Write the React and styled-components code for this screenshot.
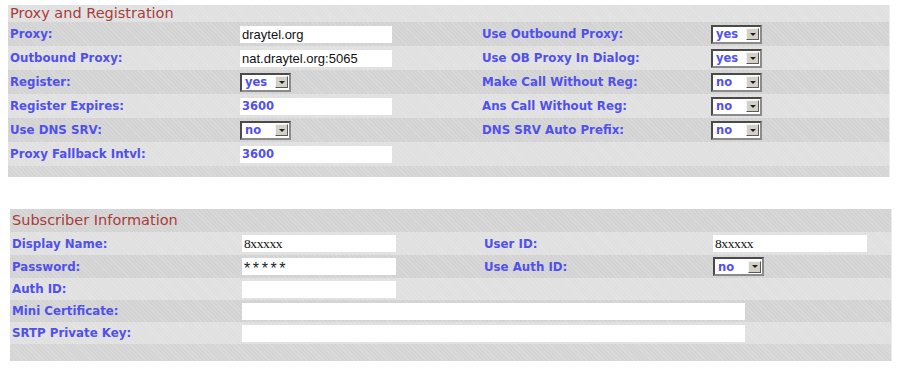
import React from "react";
import styled, { createGlobalStyle } from "styled-components";

const Global = createGlobalStyle`
  body {
    margin: 0;
    background: #ffffff;
    font-family: "DejaVu Sans", Verdana, sans-serif;
  }
`;

const hatch = `repeating-linear-gradient(
    45deg,
    rgba(255, 255, 255, 0.14) 0 1px,
    transparent 1px 3px
  )`;

const Page = styled.div`
  width: 900px;
  height: 378px;
  padding-top: 5px;
  box-sizing: border-box;
  background: #fff;
`;

const Panel = styled.div`
  margin-left: ${(p) => p.left}px;
  width: ${(p) => p.width}px;
  margin-bottom: ${(p) => p.gap || 0}px;
  background: #d5d5d5;
  background-image: ${hatch};
  border-right: 1px solid #ececec;
  padding-bottom: ${(p) => p.bottom}px;
`;

const Title = styled.div`
  height: ${(p) => p.h}px;
  line-height: ${(p) => p.h}px;
  padding-left: 2px;
  font-size: 14.5px;
  color: #a83c3c;
  background: ${(p) => (p.dark ? "#d3d3d3" : "#e0e0e0")};
  background-image: ${hatch};
`;

const Row = styled.div`
  display: grid;
  grid-template-columns: 230px 242px 229px 1fr;
  align-items: center;
  height: ${(p) => p.h}px;
  padding-left: 2px;
  background: ${(p) => (p.dark ? "#d3d3d3" : "#e0e0e0")};
  background-image: ${hatch};
`;

const Label = styled.div`
  font-size: 11.8px;
  font-weight: bold;
  color: #5050ee;
  white-space: nowrap;
`;

const Field = styled.div`
  grid-column: ${(p) => p.span || "auto"};
  display: flex;
  align-items: center;
`;

const TextBox = styled.div`
  flex-shrink: 0;
  width: ${(p) => p.w || 152}px;
  height: 17px;
  background: #fff;
  box-sizing: border-box;
  padding-left: 2px;
  display: flex;
  align-items: center;
  font-family: "DejaVu Sans", Verdana, sans-serif;
  font-size: 11.5px;
  font-weight: bold;
  color: #5050ee;
  white-space: nowrap;
`;

const PlainText = styled.span`
  font-family: "Liberation Sans", Arial, sans-serif;
  font-size: 13px;
  font-weight: normal;
  color: #111;
`;

const SerifText = styled.span`
  font-family: "Liberation Serif", "Times New Roman", serif;
  font-size: 13.5px;
  font-weight: normal;
  letter-spacing: -0.4px;
  color: #111;
`;

const Stars = styled.span`
  font-family: "Liberation Sans", Arial, sans-serif;
  font-size: 16px;
  font-weight: normal;
  letter-spacing: 2.6px;
  color: #222;
  padding-top: 5px;
`;

const Select = styled.div`
  width: 51px;
  height: 19px;
  box-sizing: border-box;
  border: 2px solid #4a4a4a;
  border-right-color: #8a8a8a;
  border-bottom-color: #8a8a8a;
  background: #fff;
  display: flex;
  align-items: center;
  justify-content: space-between;
  padding: 0 1px 0 3px;
  font-size: 11.5px;
  font-weight: bold;
  color: #5050ee;
`;

const Arrow = styled.span`
  width: 13px;
  height: 12px;
  box-sizing: border-box;
  background: #d4d0c8;
  border: 1px solid;
  border-color: #f4f4f4 #5a5a5a #5a5a5a #f4f4f4;
  display: flex;
  align-items: center;
  justify-content: center;
  &::after {
    content: "";
    border-left: 3px solid transparent;
    border-right: 3px solid transparent;
    border-top: 3px solid #222;
  }
`;

const Drop = ({ value }) => (
  <Select>
    {value}
    <Arrow />
  </Select>
);

const proxyRows = [
  ["Proxy:", <TextBox><PlainText>draytel.org</PlainText></TextBox>, "Use Outbound Proxy:", <Drop value="yes" />],
  ["Outbound Proxy:", <TextBox><PlainText>nat.draytel.org:5065</PlainText></TextBox>, "Use OB Proxy In Dialog:", <Drop value="yes" />],
  ["Register:", <Drop value="yes" />, "Make Call Without Reg:", <Drop value="no" />],
  ["Register Expires:", <TextBox>3600</TextBox>, "Ans Call Without Reg:", <Drop value="no" />],
  ["Use DNS SRV:", <Drop value="no" />, "DNS SRV Auto Prefix:", <Drop value="no" />],
  ["Proxy Fallback Intvl:", <TextBox>3600</TextBox>, null, null],
];

const App = () => (
  <Page>
    <Global />
    <Panel left={8} width={881} bottom={11} gap={32}>
      <Title h={17}>Proxy and Registration</Title>
      {proxyRows.map(([l, f, rl, rf], i) => (
        <Row key={l} h={24} dark={i % 2 === 0}>
          <Label>{l}</Label>
          <Field>{f}</Field>
          <Label>{rl}</Label>
          <Field>{rf}</Field>
        </Row>
      ))}
    </Panel>

    <Panel left={10} width={881} bottom={17}>
      <Title h={23} dark>Subscriber Information</Title>
      <Row h={23}>
        <Label>Display Name:</Label>
        <Field>
          <TextBox w={154}><SerifText>8xxxxx</SerifText></TextBox>
        </Field>
        <Label>User ID:</Label>
        <Field>
          <TextBox w={154}><SerifText>8xxxxx</SerifText></TextBox>
        </Field>
      </Row>
      <Row h={23} dark>
        <Label>Password:</Label>
        <Field>
          <TextBox w={154}><Stars>*****</Stars></TextBox>
        </Field>
        <Label>Use Auth ID:</Label>
        <Field>
          <Drop value="no" />
        </Field>
      </Row>
      <Row h={22}>
        <Label>Auth ID:</Label>
        <Field>
          <TextBox w={154} />
        </Field>
      </Row>
      <Row h={22} dark>
        <Label>Mini Certificate:</Label>
        <Field span="2 / 4">
          <TextBox w={503} />
        </Field>
      </Row>
      <Row h={22}>
        <Label>SRTP Private Key:</Label>
        <Field span="2 / 4">
          <TextBox w={503} />
        </Field>
      </Row>
    </Panel>
  </Page>
);

export default App;
